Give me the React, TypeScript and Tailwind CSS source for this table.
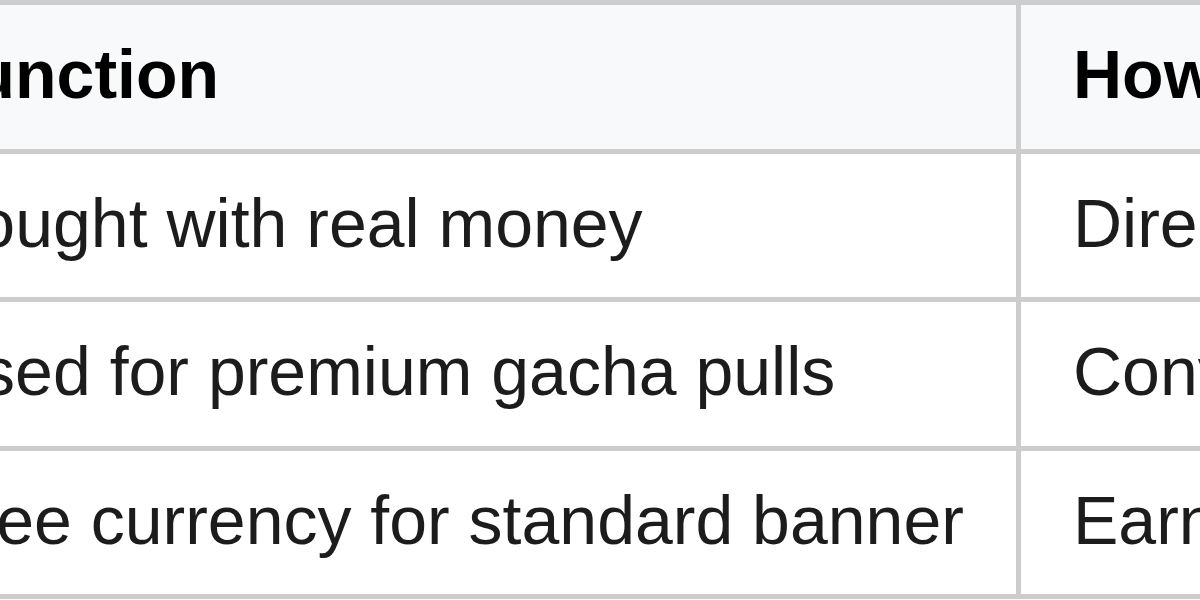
import React from "react";

const rows: [string, string][] = [
  ["Bought with real money", "Direct purchase in the shop"],
  ["Used for premium gacha pulls", "Converted from premium currency"],
  ["Free currency for standard banner", "Earned through events and quests"],
];

export default function App() {
  const cellBase =
    "box-border h-[148.5px] border-r-[5px] border-b-[5px] border-[#cdcdcd] pt-[31px] whitespace-nowrap overflow-hidden text-[68px] leading-[76px]";
  const c1 = `${cellBase} pl-[49px]`;
  const c2 = `${cellBase} pl-[52px]`;
  return (
    <div className="w-[1200px] h-[600px] overflow-hidden bg-white">
      <div
        className="-ml-[122px] w-[1800px] grid grid-cols-[1138px_662px] border-t-[5px] border-l-[5px] border-[#cdcdcd] text-[#1c1c1c]"
        style={{ fontFamily: '"Liberation Sans", Arial, sans-serif' }}
      >
        <div className={`${c1} bg-[#f8f9fa] font-bold text-black`}>Function</div>
        <div className={`${c2} bg-[#f8f9fa] font-bold text-black`}>How to obtain</div>
        {rows.map(([a, b]) => (
          <React.Fragment key={a}>
            <div className={`${c1} bg-white`}>{a}</div>
            <div className={`${c2} bg-white`}>{b}</div>
          </React.Fragment>
        ))}
      </div>
    </div>
  );
}
